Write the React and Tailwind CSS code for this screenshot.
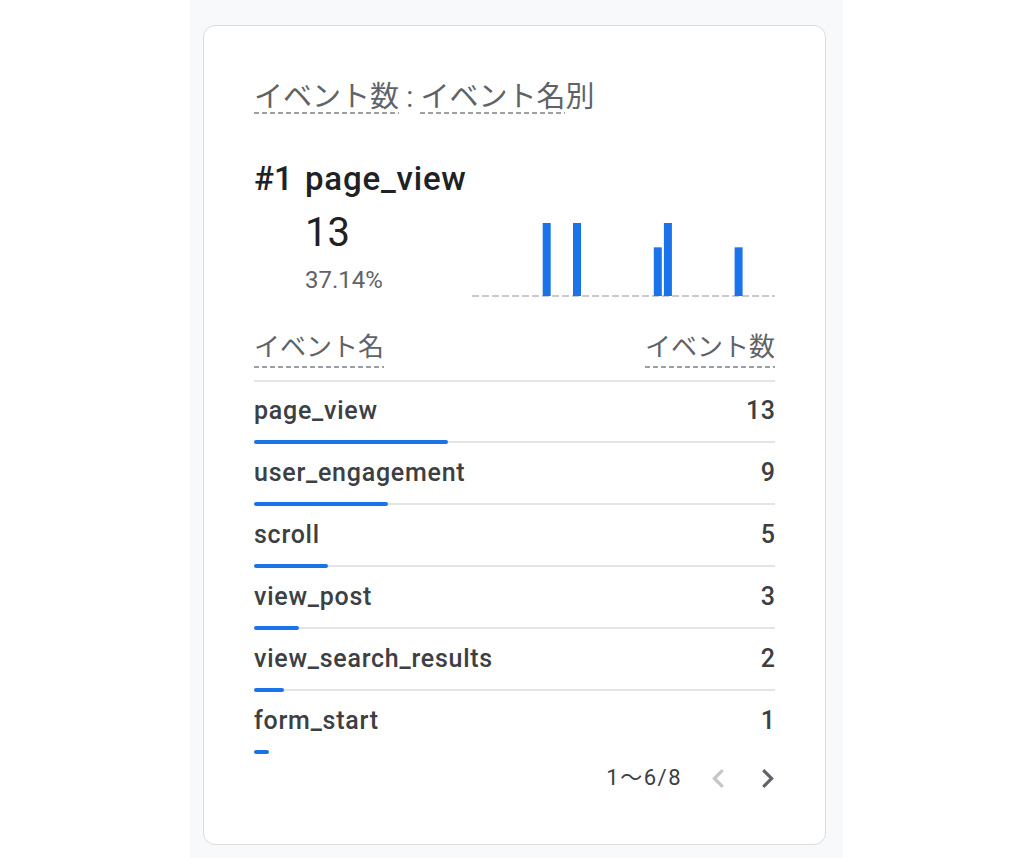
import React from 'react';

const events = [
    { name: 'page_view', count: 13 },
    { name: 'user_engagement', count: 9 },
    { name: 'scroll', count: 5 },
    { name: 'view_post', count: 3 },
    { name: 'view_search_results', count: 2 },
    { name: 'form_start', count: 1 },
];
const TOTAL = 35;

// page_view counts over the period, one slot per bar
const spark = [0, 0, 0, 0, 0, 0, 0, 3, 0, 0, 3, 0, 0, 0, 0, 0, 0, 0, 2, 3, 0, 0, 0, 0, 0, 0, 2, 0, 0, 0];

const Dashed = () => (
    <div className="h-[2px] w-full bg-[repeating-linear-gradient(90deg,#9aa0a6_0_5px,transparent_5px_8px)]"></div>
);

const Underlined = ({ children, className = '' }) => (
    <div className={`flex flex-col ${className}`}>
        <span>{children}</span>
        <Dashed />
    </div>
);

const Sparkline = () => {
    const w = 303;
    const h = 88;
    const base = 85;
    const slot = w / spark.length;
    return (
        <svg width={w} height={h} viewBox={`0 0 ${w} ${h}`}>
            <line x1="0" y1={base} x2={w} y2={base} stroke="#c8cacd" strokeWidth="2" strokeDasharray="7 3" />
            {spark.map((v, i) =>
                v > 0 ? (
                    <rect key={i} x={i * slot} y={base - (v / 3) * 73} width="8" height={(v / 3) * 73} fill="#1a73e8" />
                ) : null
            )}
        </svg>
    );
};

const Chevron = ({ dir, color }) => (
    <svg width="12" height="19" viewBox={dir === 'left' ? '8 6 7.41 12' : '8.59 6 7.41 12'} fill={color}>
        {dir === 'left' ? (
            <path d="M15.41 7.41L14 6l-6 6 6 6 1.41-1.41L10.83 12z" />
        ) : (
            <path d="M10 6L8.59 7.41 13.17 12l-4.58 4.59L10 18l6-6z" />
        )}
    </svg>
);

const EventRow = ({ name, count, last }) => (
    <div className="pt-[14px]">
        <div className="flex justify-between items-center text-[25px] leading-[30px] font-medium text-[#3c4043]">
            <span className="tracking-[0.75px]">{name}</span>
            <span className="tracking-[0.5px] -mr-[0.5px]">{count}</span>
        </div>
        <div className="mt-[14px] h-[4px] flex items-center">
            <div className="h-[4px] bg-[#1a73e8] rounded-full" style={{ width: `${(count / TOTAL) * 100}%` }}></div>
            {!last && <div className="flex-1 h-[2px] bg-[#e3e5e8]"></div>}
        </div>
    </div>
);

export default function App() {
    return (
        <div className="w-full h-[858px] bg-white flex justify-center font-[Roboto,'Noto_Sans_CJK_JP',sans-serif]">
            <div className="w-[653px] h-full bg-[#f8f9fa] pt-[25px] pl-[13px]">
                <div className="w-[623px] h-[820px] bg-white border border-[#dadce0] rounded-[12px] pt-[56px] px-[50px]">
                    <div className="flex items-start text-[29px] leading-[30px] text-[#5f6368]">
                        <Underlined>イベント数</Underlined>
                        <span className="whitespace-pre"> : </span>
                        <Underlined>イベント名</Underlined>
                        <span>別</span>
                    </div>

                    <div className="mt-[45px] flex text-[33px] leading-[40px] font-medium text-[#202124]">
                        <span className="w-[51px]">#1</span>
                        <span className="tracking-[0.8px]">page_view</span>
                    </div>

                    <div className="mt-[12px] flex">
                        <div className="w-[218px] pl-[51px]">
                            <div className="text-[40px] leading-[44px] text-[#202124]">13</div>
                            <div className="mt-[10px] text-[24px] leading-[30px] text-[#5f6368]">37.14%</div>
                        </div>
                        <Sparkline />
                    </div>

                    <div className="mt-[33px] flex justify-between text-[26px] leading-[30px] text-[#5f6368]">
                        <Underlined className="gap-[4px]">イベント名</Underlined>
                        <Underlined className="gap-[4px]">イベント数</Underlined>
                    </div>
                    <div className="mt-[12px] h-[2px] bg-[#e3e5e8]"></div>

                    {events.map((e, i) => (
                        <EventRow key={e.name} {...e} last={i === events.length - 1} />
                    ))}

                    <div className="mt-[10px] flex justify-end items-center text-[22px] leading-[28px] text-[#3c4043]">
                        <span className="tracking-[1.5px]">1〜6/8</span>
                        <span className="ml-[30px]"><Chevron dir="left" color="#c4c7c5" /></span>
                        <span className="ml-[38px] mr-[1px]"><Chevron dir="right" color="#5f6368" /></span>
                    </div>
                </div>
            </div>
        </div>
    );
}
